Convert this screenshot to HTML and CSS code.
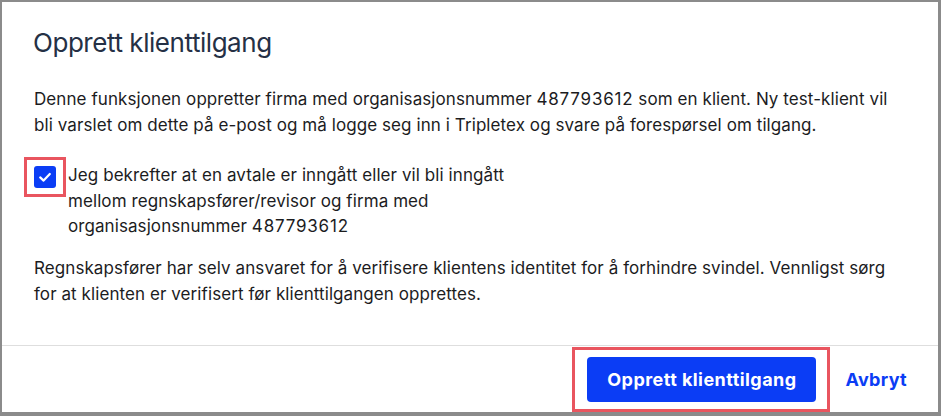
FILE: index.html
```html
<!DOCTYPE html>
<html lang="no">
<head>
<meta charset="utf-8">
<title>Opprett klienttilgang</title>
<link rel="stylesheet" href="styles.css">
</head>
<body>
<div class="dialog" role="dialog">
  <header class="dialog-header">
    <h1 class="dialog-title">Opprett klienttilgang</h1>
  </header>
  <div class="dialog-body">
    <p class="text">Denne funksjonen oppretter firma med organisasjonsnummer <span class="num">487793612</span> som en klient. Ny test-klient vil bli varslet om dette på e-post og må logge seg inn i Tripletex og svare på forespørsel om tilgang.</p>
    <label class="check-row">
      <span class="checkbox highlight">
        <svg viewBox="0 0 22 22" width="22" height="22" aria-hidden="true"><polyline points="6.2,11.4 9.6,14.6 15.8,8" fill="none" stroke="#fff" stroke-width="2.2" stroke-linecap="round" stroke-linejoin="round"/></svg>
      </span>
      <span class="check-label">Jeg bekrefter at en avtale er inngått eller vil bli inngått mellom regnskapsfører/revisor og firma med organisasjonsnummer <span class="num">487793612</span></span>
    </label>
    <p class="text text-note">Regnskapsfører har selv ansvaret for å verifisere klientens identitet for å forhindre svindel. Vennligst sørg for at klienten er verifisert før klienttilgangen opprettes.</p>
  </div>
  <footer class="dialog-footer">
    <button class="btn-primary highlight" type="button">Opprett klienttilgang</button>
    <button class="btn-link" type="button">Avbryt</button>
  </footer>
</div>
</body>
</html>
```
FILE: styles.css
```css
html, body {
  margin: 0;
  padding: 0;
}
body {
  width: 941px;
  height: 416px;
  overflow: hidden;
  background: #8b8b8b;
  font-family: Inter, "Noto Sans", "Liberation Sans", sans-serif;
  color: #1c1c1e;
}
.dialog {
  box-sizing: border-box;
  margin: 2px 3px 4px 2px;
  height: 410px;
  background: #fff;
  display: flex;
  flex-direction: column;
}
.dialog-header {
  padding: 25px 31px 0;
}
.dialog-title {
  margin: 0;
  font-size: 26px;
  line-height: 32px;
  font-weight: 400;
  letter-spacing: -0.45px;
  color: #253045;
}
.dialog-body {
  flex: 1;
  padding: 28px 32px 0;
}
.text {
  margin: 0;
  font-size: 17px;
  line-height: 25.6px;
  letter-spacing: 0.08px;
}
.num {
  letter-spacing: 0.8px;
}
.text-note {
  margin-top: 16px;
}
.check-row {
  margin-top: 25px;
  max-width: 508px;
  display: flex;
  align-items: flex-start;
  gap: 12px;
}
.checkbox {
  flex: none;
  width: 22px;
  height: 22px;
  margin-top: 3px;
  border-radius: 3px;
  background: #0b3df5;
  display: flex;
}
.check-label {
  font-size: 17px;
  line-height: 25.6px;
  letter-spacing: 0.08px;
}
.highlight {
  position: relative;
}
.highlight::after {
  content: "";
  position: absolute;
  border: 3px solid #e9555f;
  pointer-events: none;
}
.checkbox.highlight::after {
  inset: -9px -10px -9px -10px;
}
.btn-primary.highlight::after {
  inset: -10px -14px -10px -15px;
}
.dialog-footer {
  border-top: 1px solid #dedede;
  padding: 11px 23px 10px;
  display: flex;
  justify-content: flex-end;
  align-items: center;
  gap: 21px;
}
.btn-primary {
  height: 45px;
  padding: 0;
  width: 229px;
  border: none;
  border-radius: 4px;
  background: #0b3df5;
  color: #fff;
  font-family: inherit;
  font-size: 18px;
  font-weight: 700;
  letter-spacing: 0.45px;
}
.btn-link {
  height: 45px;
  padding: 0 8px;
  border: none;
  background: none;
  color: #0b3df5;
  font-family: inherit;
  font-size: 18px;
  font-weight: 700;
  letter-spacing: 0.3px;
}
```
